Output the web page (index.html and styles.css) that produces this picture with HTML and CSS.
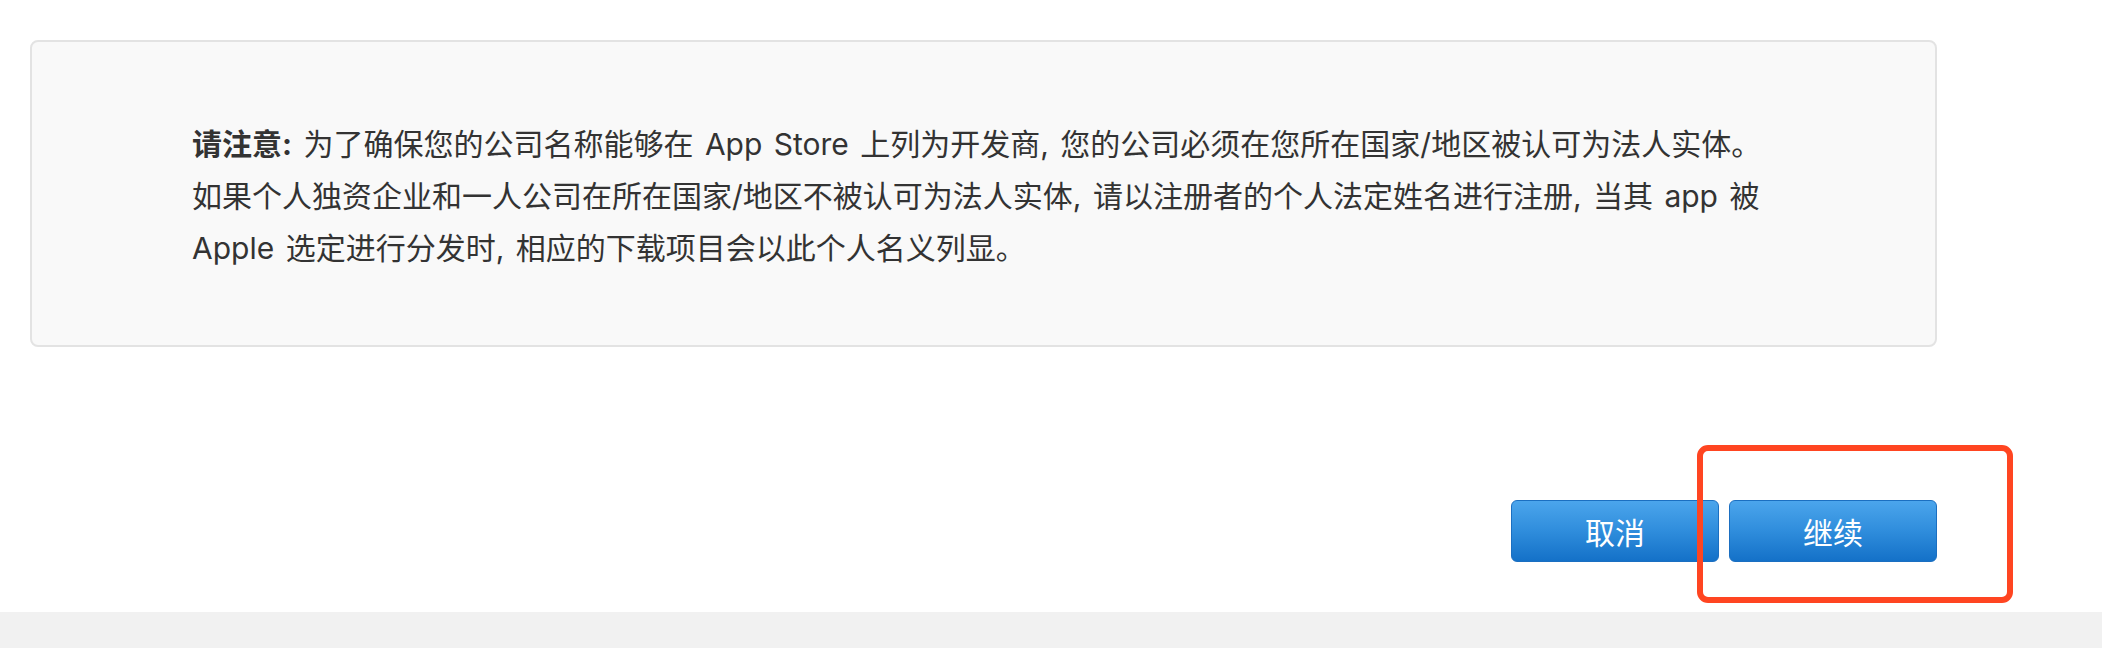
FILE: index.html
```html
<!DOCTYPE html>
<html lang="zh-CN">
<head>
<meta charset="utf-8">
<title>请注意</title>
<link rel="stylesheet" href="styles.css">
</head>
<body>
<div class="page">
  <main class="content">
    <section class="notice">
      <p class="notice-text"><strong>请注意:</strong> 为了确保您的公司名称能够在 App Store 上列为开发商, 您的公司必须在您所在国家/地区被认可为法人实体。<br>如果个人独资企业和一人公司在所在国家/地区不被认可为法人实体, 请以注册者的个人法定姓名进行注册, 当其 app 被<br>Apple 选定进行分发时, 相应的下载项目会以此个人名义列显。</p>
    </section>
    <div class="actions">
      <button class="btn" type="button">取消</button>
      <button class="btn" type="button">继续</button>
    </div>
  </main>
  <footer class="footer"></footer>
  <div class="highlight"></div>
</div>
</body>
</html>
```

FILE: styles.css
```css
html, body {
  margin: 0;
  padding: 0;
  background: #ffffff;
}

body {
  font-family: "Inter", "Noto Sans CJK SC", sans-serif;
  color: #333333;
}

.page {
  position: relative;
  width: 2102px;
  height: 648px;
  overflow: hidden;
  display: flex;
  flex-direction: column;
}

.content {
  padding: 40px 0 0 30px;
  width: 1907px;
  flex: 1;
}

.notice {
  box-sizing: border-box;
  width: 1907px;
  height: 307px;
  background: #f9f9f9;
  border: 2px solid #e3e3e3;
  border-radius: 8px;
  padding: 76px 40px 0 160px;
}

.notice-text {
  margin: 0;
  font-size: 30px;
  line-height: 52px;
  white-space: nowrap;
  word-spacing: 3px;
}

.notice-text strong {
  font-weight: bold;
}

.actions {
  display: flex;
  justify-content: flex-end;
  gap: 10px;
  margin-top: 153px;
}

.btn {
  box-sizing: border-box;
  width: 208px;
  height: 62px;
  border: 1px solid #1b6fc1;
  border-radius: 6px;
  background: linear-gradient(to bottom, #4ba5ec 0%, #2f8ddc 50%, #1471c8 100%);
  color: #ffffff;
  font-family: "Noto Sans CJK SC", sans-serif;
  font-size: 30px;
  line-height: 60px;
  padding: 0;
  text-align: center;
}

.footer {
  height: 36px;
  background: #f1f1f1;
}

.highlight {
  position: absolute;
  left: 1697px;
  top: 445px;
  width: 316px;
  height: 158px;
  box-sizing: border-box;
  border: 6px solid #ff4521;
  border-radius: 11px;
}
```
